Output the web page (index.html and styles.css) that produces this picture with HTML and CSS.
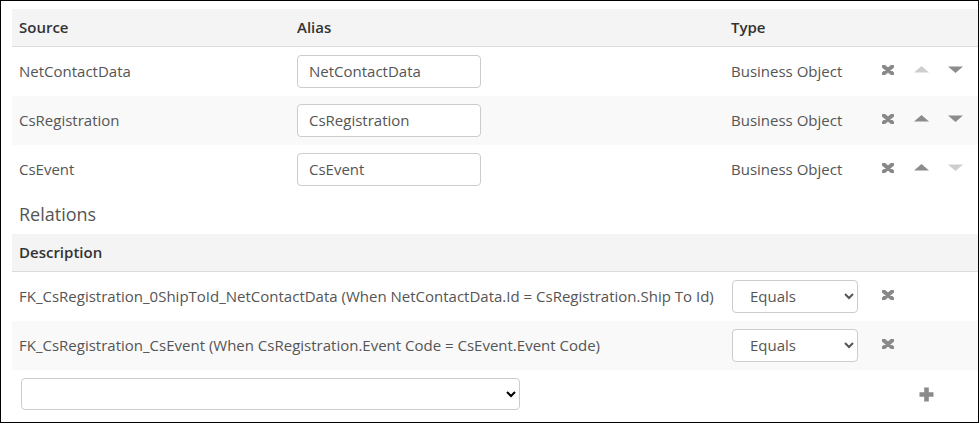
FILE: index.html
```html
<!DOCTYPE html>
<html>
<head>
<meta charset="utf-8">
<link rel="stylesheet" href="styles.css">
</head>
<body>
<div class="panel">
  <div class="grid sources">
    <div class="row head">
      <div class="cell">Source</div>
      <div class="cell">Alias</div>
      <div class="cell">Type</div>
      <div class="cell"></div>
    </div>
    <div class="row">
      <div class="cell">NetContactData</div>
      <div class="cell"><input class="alias" type="text" value="NetContactData"></div>
      <div class="cell">Business Object</div>
      <div class="cell actions">
        <svg class="ic-x" width="12" height="10" viewBox="0 0 12 10"><path d="M1.8 1.5 L10.2 8.5 M10.2 1.5 L1.8 8.5" /></svg>
        <svg class="ic-up off" width="15" height="7" viewBox="0 0 15 7"><polygon points="0,6.5 7.5,0 15,6.5"/></svg>
        <svg class="ic-down" width="15" height="7" viewBox="0 0 15 7"><polygon points="0,0.5 15,0.5 7.5,7"/></svg>
      </div>
    </div>
    <div class="row alt">
      <div class="cell">CsRegistration</div>
      <div class="cell"><input class="alias" type="text" value="CsRegistration"></div>
      <div class="cell">Business Object</div>
      <div class="cell actions">
        <svg class="ic-x" width="12" height="10" viewBox="0 0 12 10"><path d="M1.8 1.5 L10.2 8.5 M10.2 1.5 L1.8 8.5" /></svg>
        <svg class="ic-up" width="15" height="7" viewBox="0 0 15 7"><polygon points="0,6.5 7.5,0 15,6.5"/></svg>
        <svg class="ic-down" width="15" height="7" viewBox="0 0 15 7"><polygon points="0,0.5 15,0.5 7.5,7"/></svg>
      </div>
    </div>
    <div class="row">
      <div class="cell">CsEvent</div>
      <div class="cell"><input class="alias" type="text" value="CsEvent"></div>
      <div class="cell">Business Object</div>
      <div class="cell actions">
        <svg class="ic-x" width="12" height="10" viewBox="0 0 12 10"><path d="M1.8 1.5 L10.2 8.5 M10.2 1.5 L1.8 8.5" /></svg>
        <svg class="ic-up" width="15" height="7" viewBox="0 0 15 7"><polygon points="0,6.5 7.5,0 15,6.5"/></svg>
        <svg class="ic-down off" width="15" height="7" viewBox="0 0 15 7"><polygon points="0,0.5 15,0.5 7.5,7"/></svg>
      </div>
    </div>
  </div>

  <div class="section-title">Relations</div>

  <div class="grid relations">
    <div class="row head">
      <div class="cell">Description</div>
      <div class="cell"></div>
      <div class="cell"></div>
    </div>
    <div class="row">
      <div class="cell">FK_CsRegistration_0ShipToId_NetContactData (When NetContactData.Id = CsRegistration.Ship To Id)</div>
      <div class="cell"><select class="op"><option>Equals</option></select></div>
      <div class="cell actions">
        <svg class="ic-x" width="12" height="10" viewBox="0 0 12 10"><path d="M1.8 1.5 L10.2 8.5 M10.2 1.5 L1.8 8.5" /></svg>
      </div>
    </div>
    <div class="row alt">
      <div class="cell">FK_CsRegistration_CsEvent (When CsRegistration.Event Code = CsEvent.Event Code)</div>
      <div class="cell"><select class="op"><option>Equals</option></select></div>
      <div class="cell actions">
        <svg class="ic-x" width="12" height="10" viewBox="0 0 12 10"><path d="M1.8 1.5 L10.2 8.5 M10.2 1.5 L1.8 8.5" /></svg>
      </div>
    </div>
  </div>

  <div class="add-row">
    <select class="new-rel"><option></option></select>
    <svg class="ic-plus" width="15" height="15" viewBox="0 0 15 15"><path d="M5.2 0.5 H9.8 V5.2 H14.5 V9.8 H9.8 V14.5 H5.2 V9.8 H0.5 V5.2 H5.2 Z"/></svg>
  </div>
</div>
</body>
</html>
```

FILE: styles.css
```css
html, body {
  margin: 0;
  padding: 0;
  background: #fff;
}

body {
  font-family: "Open Sans", "Liberation Sans", sans-serif;
  font-size: 15px;
  color: #555;
}

.panel {
  box-sizing: border-box;
  width: 979px;
  height: 423px;
  border: 1px solid #000;
  padding: 8px 0 0 11px;
  overflow: hidden;
}

.grid .row {
  display: grid;
  height: 49px;
  align-items: center;
  background: #fff;
}

.sources .row {
  grid-template-columns: 278px 434px 146px 1fr;
}

.relations .row {
  grid-template-columns: 712px 146px 1fr;
}

.grid .row.alt {
  background: #f9f9f9;
}

.grid .row.head {
  height: 37px;
  background: #f4f4f4;
  border-bottom: 1px solid #dcdcdc;
  color: #333;
  font-weight: 600;
}

.cell {
  padding: 0 7px 2px;
  white-space: nowrap;
}

.alias {
  box-sizing: border-box;
  width: 184px;
  height: 33px;
  border: 1px solid #ccc;
  border-radius: 4px;
  padding: 0 11px;
  font-family: "Open Sans", "Liberation Sans", sans-serif;
  font-size: 15px;
  color: #555;
  background: #fff;
  margin-top: 1px;
  outline: none;
}

.op {
  box-sizing: border-box;
  width: 126px;
  height: 33px;
  margin-left: 1px;
  margin-top: 1px;
  border: 1px solid #ccc;
  border-radius: 4px;
  padding: 0 8px 0 13px;
  font-family: "Open Sans", "Liberation Sans", sans-serif;
  font-size: 15px;
  color: #555;
  background: #fff;
}

.actions {
  display: flex;
  align-items: center;
  padding-left: 12px;
  margin-top: -2px;
}

.ic-x path {
  stroke: #888;
  stroke-width: 4;
  stroke-linecap: round;
  fill: none;
}

.ic-up {
  margin-left: 20px;
}

.ic-down {
  margin-left: 19px;
}

.ic-up polygon,
.ic-down polygon {
  fill: #8c8c8c;
}

.ic-up.off polygon,
.ic-down.off polygon {
  fill: #cdcdcd;
}

.section-title {
  height: 40px;
  line-height: 40px;
  padding-left: 7px;
  font-size: 18px;
  color: #555;
}

.add-row {
  display: flex;
  align-items: center;
  margin-top: 8px;
  padding-left: 9px;
}

.new-rel {
  box-sizing: border-box;
  width: 499px;
  height: 32px;
  border: 1px solid #ccc;
  border-radius: 4px;
  background: #fff;
  font-family: "Open Sans", "Liberation Sans", sans-serif;
  font-size: 15px;
}

.ic-plus {
  margin-left: 399px;
}

.ic-plus path {
  fill: #8a8a8a;
}
```
